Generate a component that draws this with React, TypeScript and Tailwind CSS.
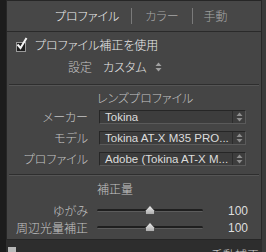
import React from "react";

const jp = "font-['Noto_Sans_CJK_JP','Noto_Sans',sans-serif] [font-feature-settings:'palt'] font-light";
const latin = "font-['Liberation_Sans','Noto_Sans_CJK_JP',sans-serif] font-normal";

function UpDown({ className = "" }: { className?: string }) {
  return (
    <svg width="7" height="10" viewBox="0 0 7 10" className={className}>
      <path d="M3.5 0.5 L6.5 4 L0.5 4 Z" fill="currentColor" />
      <path d="M0.5 6 L6.5 6 L3.5 9.5 Z" fill="currentColor" />
    </svg>
  );
}

function Select({ value }: { value: string }) {
  return (
    <div className="flex h-[14px] w-[147px] border border-t-[#262626] border-l-[#262626] border-b-[#5a5a5a] border-r-[#5a5a5a] bg-[#3d3d3d]">
      <div className={`flex-1 min-w-0 pl-[5px] text-[11.5px] leading-[12px] text-[#dcdcdc] whitespace-nowrap overflow-hidden ${latin}`}>
        {value}
      </div>
      <div className="w-[13px] flex items-center justify-center border-l border-[#2c2c2c] text-[#8e8e8e]">
        <UpDown />
      </div>
    </div>
  );
}

function Thumb() {
  return (
    <svg width="10" height="10" viewBox="0 0 10 10" className="absolute left-[48px] top-[-4px]">
      <defs>
        <linearGradient id="tg" x1="0" y1="0" x2="0" y2="1">
          <stop offset="0" stopColor="#f0f0f0" />
          <stop offset="1" stopColor="#a8a8a8" />
        </linearGradient>
      </defs>
      <path d="M5 0.5 L9.5 5.5 L9.5 9.5 L0.5 9.5 L0.5 5.5 Z" fill="url(#tg)" stroke="#2a2a2a" strokeWidth="0.6" />
    </svg>
  );
}

function Slider({ label, value }: { label: string; value: string }) {
  return (
    <div className="flex items-center h-[17px]">
      <div className="w-[81px] text-right text-[12px] text-[#c4c4c4]">{label}</div>
      <div className="relative ml-[9px] w-[106px] h-[3px] rounded-full bg-[#1f1f1f] border-b border-[#5c5c5c]">
        <Thumb />
      </div>
      <div className={`w-[45px] text-right text-[12px] text-[#dedede] ${latin}`}>{value}</div>
    </div>
  );
}

function Separator() {
  return (
    <div className="mx-[2px] h-[2px] border-t border-[#2e2e2e] border-b border-b-[#555555]" />
  );
}

export default function App() {
  return (
    <div className={`w-[266px] h-[252px] flex overflow-hidden bg-[#1c1c1c] ${jp}`}>
      <div className="w-[6px] shrink-0" />
      <div className="w-[256px] shrink-0 flex flex-col">
        <div className="h-[240px] shrink-0 flex flex-col border border-[#262626] bg-[#454545]">
          {/* tabs */}
          <div className="h-[31px] shrink-0 flex items-center pl-[48px] border-b border-[#2a2a2a] bg-[#474747] text-[12px]">
            <span className="text-[#f2f2f2]">プロファイル</span>
            <span className="ml-[12px] w-px h-[16px] bg-[#7a7a7a]" />
            <span className="ml-[13px] text-[#a6a6a6]">カラー</span>
            <span className="ml-[13px] w-px h-[16px] bg-[#7a7a7a]" />
            <span className="ml-[11px] text-[#a6a6a6]">手動</span>
          </div>

          {/* checkbox */}
          <div className="h-[24px] mt-[1px] flex items-center pl-[9px] text-[12px] text-[#ececec]">
            <div className="relative w-[10px] h-[10px] mt-[3px] bg-[#1e1e1e] border border-[#9a9a9a]">
              <svg width="12" height="13" viewBox="0 0 12 13" className="absolute left-[-1px] top-[-6px]">
                <path d="M1.5 7.5 L4.5 11 L10.5 1" fill="none" stroke="#f4f4f4" strokeWidth="2" />
              </svg>
            </div>
            <span className="ml-[9px]">プロファイル補正を使用</span>
          </div>

          {/* setting */}
          <div className="h-[20px] flex items-center text-[12px]">
            <span className="w-[85px] text-right text-[#c4c4c4]">設定</span>
            <span className="ml-[11px] text-[#e6e6e6]">カスタム</span>
            <UpDown className="ml-[8px] text-[#a0a0a0]" />
          </div>

          <div className="h-[7px]" />
          <Separator />

          {/* lens profile */}
          <div className="h-[23px] flex items-center pl-[90px] text-[12px] text-[#c4c4c4]">レンズプロファイル</div>
          <div className="flex flex-col gap-[6px]">
            {[
              ["メーカー", "Tokina"],
              ["モデル", "Tokina AT-X M35 PRO..."],
              ["プロファイル", "Adobe (Tokina AT-X M..."],
            ].map(([l, v]) => (
              <div key={l} className="flex items-center h-[15px]">
                <div className="w-[81px] text-right text-[12px] text-[#c4c4c4]">{l}</div>
                <div className="ml-[11px]">
                  <Select value={v} />
                </div>
              </div>
            ))}
          </div>

          <div className="h-[8px]" />
          <Separator />

          {/* amount */}
          <div className="h-[26px] flex items-center pl-[90px] text-[12px] text-[#c4c4c4]">補正量</div>
          <Slider label="ゆがみ" value="100" />
          <Slider label="周辺光量補正" value="100" />
        </div>

        {/* next panel header (clipped) */}
        <div className="flex-1 relative bg-[#2d2d2d] overflow-hidden">
          <div className="absolute left-[2px] top-[7px] w-[8px] h-[8px] bg-[#b8b8b8]" />
          <div className="absolute left-[205px] top-[6px] text-[12px] text-[#d0d0d0]">手動補正</div>
        </div>
      </div>
      <div className="flex-1 bg-[#3a3a3a]" />
    </div>
  );
}
